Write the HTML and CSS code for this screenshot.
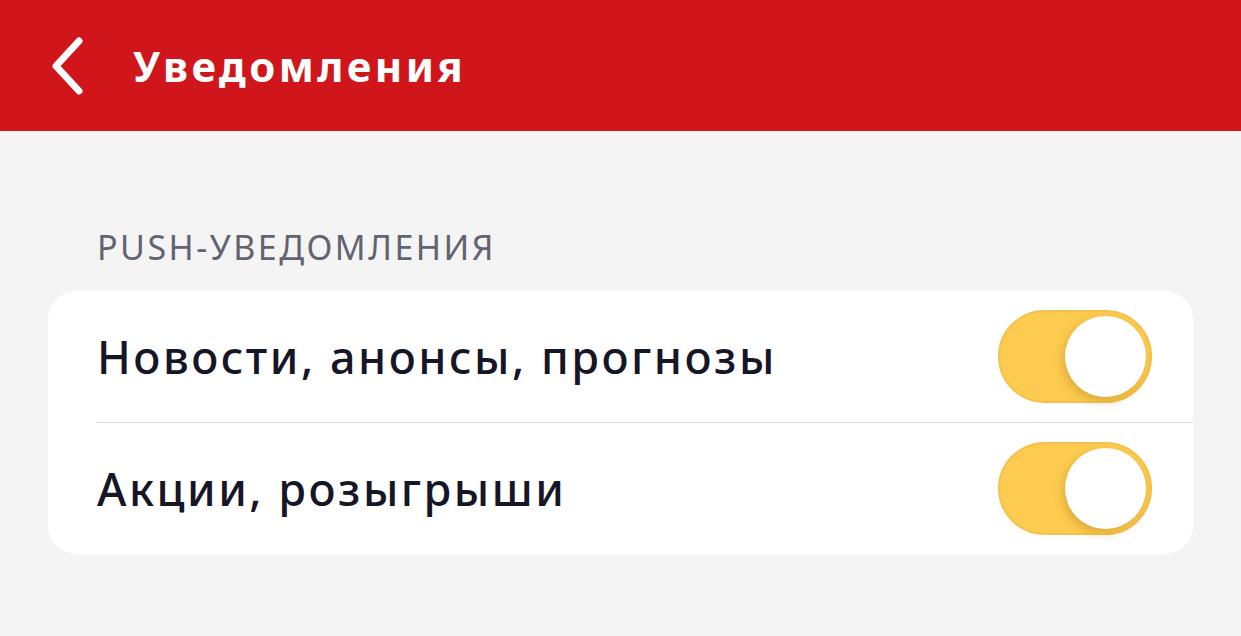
FILE: index.html
```html
<!DOCTYPE html>
<html lang="ru">
<head>
<meta charset="utf-8">
<title>Уведомления</title>
<link rel="stylesheet" href="styles.css">
</head>
<body>
<header class="topbar">
  <button class="back" aria-label="Назад">
    <svg width="36" height="58" viewBox="0 0 36 58"><path d="M30 4 L7 29 L30 54" fill="none" stroke="#fff" stroke-width="7" stroke-linecap="round" stroke-linejoin="round"/></svg>
  </button>
  <h1 class="title">Уведомления</h1>
</header>
<main class="content">
  <div class="section-label">PUSH-УВЕДОМЛЕНИЯ</div>
  <div class="card">
    <div class="row">
      <span class="row-text">Новости, анонсы, прогнозы</span>
      <span class="toggle on"><span class="knob"></span></span>
    </div>
    <div class="row">
      <span class="row-text">Акции, розыгрыши</span>
      <span class="toggle on"><span class="knob"></span></span>
    </div>
  </div>
</main>
</body>
</html>
```
FILE: styles.css
```css
* { box-sizing: border-box; }
html, body { margin: 0; padding: 0; }
body {
  background: #f4f4f4;
  font-family: "Noto Sans", "Open Sans", sans-serif;
  width: 1241px;
  height: 636px;
  overflow: hidden;
}
.topbar {
  height: 131px;
  background: #d0161a;
  display: flex;
  align-items: center;
  padding-left: 49px;
}
.back {
  border: 0;
  background: none;
  padding: 0;
  width: 36px;
  height: 58px;
  display: flex;
  align-items: center;
  margin-right: 48px;
}
.title {
  margin: 0;
  color: #fff;
  font-size: 42px;
  font-weight: 700;
  letter-spacing: 3.4px;
}
.content {
  padding: 0 48px;
}
.section-label {
  margin-top: 96px;
  padding-left: 49px;
  color: #62636f;
  font-size: 34px;
  height: 64px;
  line-height: 40px;
  letter-spacing: 2.5px;
}
.card {
  background: #fff;
  border-radius: 28px;
  overflow: hidden;
}
.row {
  height: 131px;
  display: flex;
  align-items: center;
  justify-content: space-between;
  margin-left: 49px;
  padding-right: 41px;
}
.row + .row {
  border-top: 1px solid #dedede;
  height: 132px;
}
.row-text {
  color: #161626;
  font-size: 45px;
  font-weight: 500;
  letter-spacing: 2.5px;
}
.toggle {
  width: 154px;
  height: 93px;
  border-radius: 47px;
  background: #fdcb50;
  border: 2px solid #f4c24a;
  position: relative;
  display: block;
}
.knob {
  position: absolute;
  right: 4px;
  top: 4px;
  width: 81px;
  height: 81px;
  border-radius: 50%;
  background: #fff;
  box-shadow: -2px 4px 10px rgba(160, 110, 20, 0.35);
}
```
